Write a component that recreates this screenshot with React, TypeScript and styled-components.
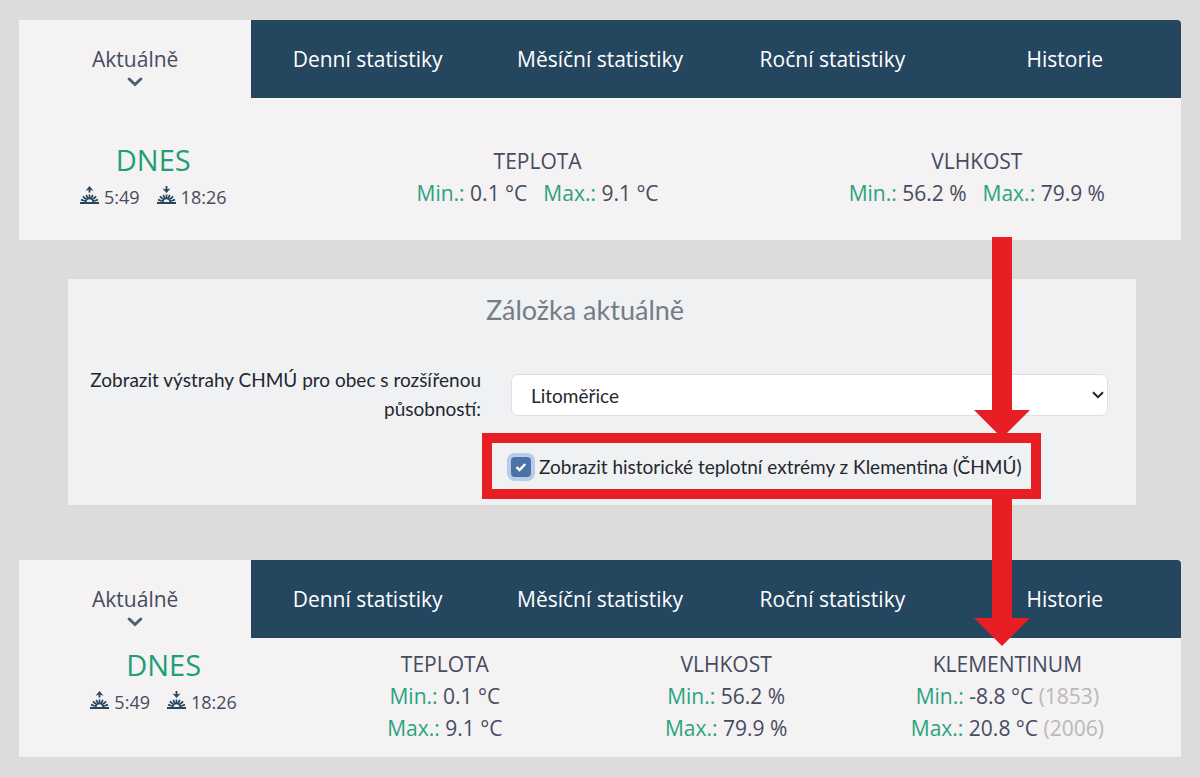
import React from "react";
import styled, { createGlobalStyle } from "styled-components";

const color = {
  page: "#dddcda",
  card: "#f4f2f3",
  navy: "#25465f",
  ink: "#454b60",
  green: "#2ba380",
  greenStrong: "#1f9e78",
  muted: "#b9b8ba",
  panel: "#eff1f3",
  red: "#e81e25",
};

const GlobalStyle = createGlobalStyle`
  *, *::before, *::after { box-sizing: border-box; }
  body {
    margin: 0;
    background: ${color.page};
    color: ${color.ink};
    font-family: "Open Sans", "Noto Sans", sans-serif;
    font-size: 21px;
    line-height: 32px;
  }
`;

const Page = styled.main`
  display: flex;
  flex-direction: column;
  padding: 20px 19px;
`;

const Card = styled.section`
  background: ${color.card};
  border-radius: 0 4px 0 0;
`;

const Tabs = styled.nav`
  display: grid;
  grid-template-columns: repeat(5, 1fr);
  min-height: 78px;
  border-radius: 0 4px 0 0;
  overflow: hidden;
`;

const Tab = styled.a<{ $active?: boolean }>`
  display: flex;
  flex-direction: column;
  align-items: center;
  gap: 2px;
  padding-top: 23px;
  text-decoration: none;
  white-space: nowrap;
  color: ${(p) => (p.$active ? color.ink : "#fff")};
  background: ${(p) => (p.$active ? color.card : color.navy)};
`;

const WideStats = styled.div`
  display: flex;
  justify-content: space-between;
  align-items: flex-start;
  padding: 45px 76px 23px 61px;

  > div + div {
    margin-top: 2px;
  }
`;

const ColumnStats = styled.div`
  display: grid;
  grid-template-columns: repeat(4, 1fr);
  justify-items: center;
  padding: 10px 33px 13px 4px;
`;

const Day = styled.div`
  text-align: center;
`;

const DayTitle = styled.h2`
  margin: 0;
  font-size: 29px;
  font-weight: 400;
  line-height: 34px;
  color: ${color.greenStrong};
`;

const SunTimes = styled.div`
  display: flex;
  gap: 17px;
  font-size: 18px;
  line-height: 40px;
`;

const SunTime = styled.span`
  display: flex;
  gap: 5px;
`;

const SunSvg = styled.svg`
  margin-top: 9px;
`;

const Stat = styled.div`
  text-align: center;
  white-space: nowrap;
`;

const StatTitle = styled.h3`
  margin: 0;
  font-size: 21px;
  font-weight: 400;
  line-height: 32px;
`;

const Readings = styled.div<{ $stacked?: boolean }>`
  display: flex;
  flex-direction: ${(p) => (p.$stacked ? "column" : "row")};
  column-gap: 16px;
`;

const Label = styled.span`
  color: ${color.green};
`;

const Year = styled.span`
  color: ${color.muted};
`;

const Settings = styled.form`
  position: relative;
  margin: 39px 45px 55px 49px;
  padding: 13px 28px 24px 0;
  background: ${color.panel};
  color: #24272e;
  font-family: Lato, sans-serif;
  font-size: 19px;
  line-height: 29px;
`;

const SettingsTitle = styled.h2`
  margin: 0 0 46px;
  padding-right: 6px;
  font-size: 27px;
  font-weight: 400;
  line-height: 36px;
  text-align: center;
  color: #747d86;
`;

const Fields = styled.div`
  display: grid;
  grid-template-columns: 413fr 597fr;
  column-gap: 30px;
`;

const FieldLabel = styled.label`
  margin-top: -9px;
  padding-left: 12px;
  text-align: right;
`;

const SelectBox = styled.div`
  position: relative;
  align-self: start;

  svg {
    position: absolute;
    top: 17px;
    right: 4px;
    pointer-events: none;
  }
`;

const Select = styled.select`
  display: block;
  width: 100%;
  height: 42px;
  padding: 0 19px;
  border: 1px solid #dcdfe4;
  border-radius: 7px;
  background: #fff;
  color: inherit;
  font: inherit;
  appearance: none;
`;

const CheckRow = styled.label`
  position: relative;
  grid-column: 2;
  justify-self: start;
  display: flex;
  align-items: center;
  gap: 8px;
  margin-top: 29px;
  white-space: nowrap;

  &::after {
    content: "";
    position: absolute;
    inset: -19px -20px -18px -29px;
    border: 10px solid ${color.red};
    pointer-events: none;
  }
`;

const CheckBox = styled.span`
  position: relative;
  display: flex;

  svg {
    position: absolute;
    inset: 0;
    pointer-events: none;
  }
`;

const Check = styled.input`
  width: 20px;
  height: 20px;
  margin: 0;
  border-radius: 4px;
  background: #4a72a6;
  box-shadow: 0 0 0 4px #b7cce8;
  appearance: none;
`;

const Arrow = styled.svg<{ $top: number }>`
  position: absolute;
  z-index: 1;
  top: ${(p) => p.$top}px;
  right: 106px;
  fill: ${color.red};
  pointer-events: none;
`;

function DownArrow({ top, length }: { top: number; length: number }) {
  const neck = length - 28;
  return (
    <Arrow $top={top} width="56" height={length} aria-hidden="true">
      <path d={`M18 0H38V${neck}H56L28 ${length}L0 ${neck}H18Z`} />
    </Arrow>
  );
}

function SunIcon({ set }: { set?: boolean }) {
  return (
    <SunSvg width="19" height="19" viewBox="0 0 19 19" fill="none" stroke={color.navy} aria-hidden="true">
      <path d="M0 17H19" strokeWidth="2" />
      <path d="M5.700 16a3.800 3.800 0 0 1 7.600 0" strokeWidth="1.900" />
      <path
        d="M4.800 15 1 13.600M5.900 13 2.800 10.300M7.600 12 6.200 8.900M9.500 12V8.500M11.400 12 12.800 8.900M13.100 13 16.200 10.300M14.200 15 18 13.600"
        strokeWidth="1.700"
      />
      {set ? (
        <>
          <path d="M9.500 0V5" strokeWidth="1.800" />
          <path d="M5.500 2.400 9.500 3.600 13.500 2.400 9.500 7Z" fill={color.navy} stroke="none" />
        </>
      ) : (
        <>
          <path d="M9.500 2V6.600" strokeWidth="1.800" />
          <path d="M5.500 4.800 9.500 0 13.500 4.800 9.500 3.600Z" fill={color.navy} stroke="none" />
        </>
      )}
    </SunSvg>
  );
}

function TabBar() {
  return (
    <Tabs>
      <Tab href="#aktualne" $active>
        Aktuálně
        <svg width="16" height="10" viewBox="0 0 16 10" fill="none" aria-hidden="true">
          <path d="M2.200 2 8 7.500 13.800 2" stroke="#4a6176" strokeWidth="3" strokeLinecap="round" />
        </svg>
      </Tab>
      <Tab href="#denni">Denní statistiky</Tab>
      <Tab href="#mesicni">Měsíční statistiky</Tab>
      <Tab href="#rocni">Roční statistiky</Tab>
      <Tab href="#historie">Historie</Tab>
    </Tabs>
  );
}

function Today() {
  return (
    <Day>
      <DayTitle>DNES</DayTitle>
      <SunTimes>
        <SunTime>
          <SunIcon />
          5:49
        </SunTime>
        <SunTime>
          <SunIcon set />
          18:26
        </SunTime>
      </SunTimes>
    </Day>
  );
}

type Reading = { value: string; year?: string };

function StatBlock(props: { title: string; min: Reading; max: Reading; stacked?: boolean }) {
  const rows: [string, Reading][] = [
    ["Min.:", props.min],
    ["Max.:", props.max],
  ];
  return (
    <Stat>
      <StatTitle>{props.title}</StatTitle>
      <Readings $stacked={props.stacked}>
        {rows.map(([label, r]) => (
          <span key={label}>
            <Label>{label}</Label> {r.value}
            {r.year && <Year> ({r.year})</Year>}
          </span>
        ))}
      </Readings>
    </Stat>
  );
}

export default function App() {
  return (
    <>
      <GlobalStyle />
      <Page>
        <Card>
          <TabBar />
          <WideStats>
            <Today />
            <StatBlock title="TEPLOTA" min={{ value: "0.1 °C" }} max={{ value: "9.1 °C" }} />
            <StatBlock title="VLHKOST" min={{ value: "56.2 %" }} max={{ value: "79.9 %" }} />
          </WideStats>
        </Card>

        <Settings>
          <SettingsTitle>Záložka aktuálně</SettingsTitle>
          <Fields>
            <FieldLabel htmlFor="obec">
              Zobrazit výstrahy CHMÚ pro obec s rozšířenou působností:
            </FieldLabel>
            <SelectBox>
              <Select id="obec" defaultValue="Litoměřice">
                <option>Litoměřice</option>
              </Select>
              <svg width="12" height="8" viewBox="0 0 12 8" fill="none" aria-hidden="true">
                <path d="M1 1.200 6 6.200 11 1.200" stroke="#222" strokeWidth="2" />
              </svg>
            </SelectBox>
            <CheckRow htmlFor="klementinum">
              <CheckBox>
                <Check id="klementinum" type="checkbox" defaultChecked />
                <svg width="20" height="20" viewBox="0 0 20 20" fill="none" aria-hidden="true">
                  <path d="M5.500 10.200 8.500 13 14.300 7" stroke="#fff" strokeWidth="2.400" />
                </svg>
              </CheckBox>
              Zobrazit historické teplotní extrémy z Klementina (ČHMÚ)
            </CheckRow>
          </Fields>
          <DownArrow top={-42} length={201} />
          <DownArrow top={220} length={147} />
        </Settings>

        <Card>
          <TabBar />
          <ColumnStats>
            <Today />
            <StatBlock stacked title="TEPLOTA" min={{ value: "0.1 °C" }} max={{ value: "9.1 °C" }} />
            <StatBlock stacked title="VLHKOST" min={{ value: "56.2 %" }} max={{ value: "79.9 %" }} />
            <StatBlock
              stacked
              title="KLEMENTINUM"
              min={{ value: "-8.8 °C", year: "1853" }}
              max={{ value: "20.8 °C", year: "2006" }}
            />
          </ColumnStats>
        </Card>
      </Page>
    </>
  );
}
